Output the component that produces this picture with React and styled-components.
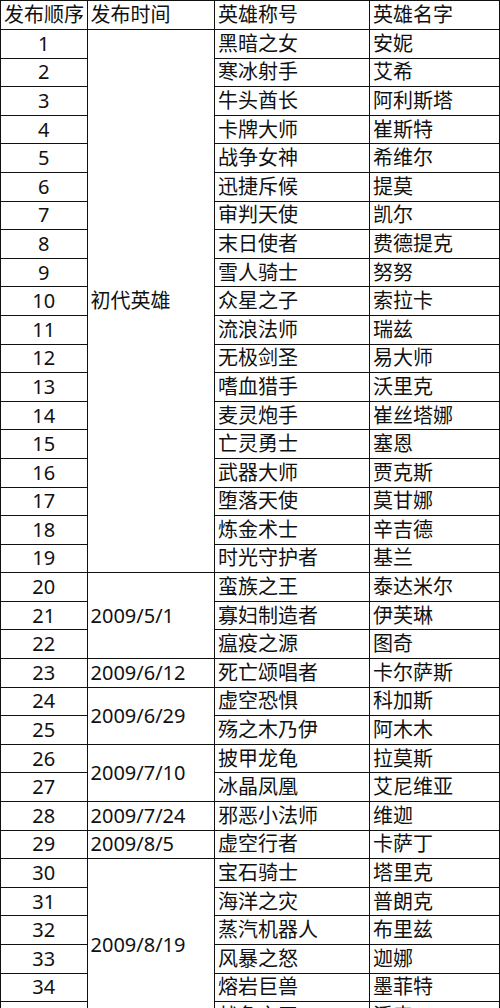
import styled, { createGlobalStyle } from "styled-components";

const GlobalStyle = createGlobalStyle`
  html, body {
    margin: 0;
    padding: 0;
    background: #fff;
    overflow: hidden;
  }
  body {
    font-family: "Noto Sans", "Noto Sans CJK SC", sans-serif;
    color: #111;
  }
`;

const heroes = [
  ["黑暗之女", "安妮"],
  ["寒冰射手", "艾希"],
  ["牛头酋长", "阿利斯塔"],
  ["卡牌大师", "崔斯特"],
  ["战争女神", "希维尔"],
  ["迅捷斥候", "提莫"],
  ["审判天使", "凯尔"],
  ["末日使者", "费德提克"],
  ["雪人骑士", "努努"],
  ["众星之子", "索拉卡"],
  ["流浪法师", "瑞兹"],
  ["无极剑圣", "易大师"],
  ["嗜血猎手", "沃里克"],
  ["麦灵炮手", "崔丝塔娜"],
  ["亡灵勇士", "塞恩"],
  ["武器大师", "贾克斯"],
  ["堕落天使", "莫甘娜"],
  ["炼金术士", "辛吉德"],
  ["时光守护者", "基兰"],
  ["蛮族之王", "泰达米尔"],
  ["寡妇制造者", "伊芙琳"],
  ["瘟疫之源", "图奇"],
  ["死亡颂唱者", "卡尔萨斯"],
  ["虚空恐惧", "科加斯"],
  ["殇之木乃伊", "阿木木"],
  ["披甲龙龟", "拉莫斯"],
  ["冰晶凤凰", "艾尼维亚"],
  ["邪恶小法师", "维迦"],
  ["虚空行者", "卡萨丁"],
  ["宝石骑士", "塔里克"],
  ["海洋之灾", "普朗克"],
  ["蒸汽机器人", "布里兹"],
  ["风暴之怒", "迦娜"],
  ["熔岩巨兽", "墨菲特"],
  ["战争之王", "潘森"],
];

// release date groups: [label, first row, row count]
const dates = [
  ["初代英雄", 1, 19],
  ["2009/5/1", 20, 3],
  ["2009/6/12", 23, 1],
  ["2009/6/29", 24, 2],
  ["2009/7/10", 26, 2],
  ["2009/7/24", 28, 1],
  ["2009/8/5", 29, 1],
  ["2009/8/19", 30, 6],
];

function App() {
  return (
    <>
      <GlobalStyle />
      <Table>
        <colgroup>
          <col style={{ width: 86.5 }} />
          <col style={{ width: 127.5 }} />
          <col style={{ width: 155 }} />
          <col style={{ width: 130 }} />
        </colgroup>
        <thead>
          <HeadRow>
            <Cell>发布顺序</Cell>
            <Cell>发布时间</Cell>
            <Cell>英雄称号</Cell>
            <Cell>英雄名字</Cell>
          </HeadRow>
        </thead>
        <tbody>
          {heroes.map(([title, name], i) => {
            const n = i + 1;
            const group = dates.find(d => d[1] === n);
            return (
              <Row key={n}>
                <Cell $center>{n}</Cell>
                {group && <Cell rowSpan={group[2]}>{group[0]}</Cell>}
                <Cell>{title}</Cell>
                <Cell>{name}</Cell>
              </Row>
            );
          })}
        </tbody>
      </Table>
    </>
  );
}

const Table = styled.table`
  border-collapse: collapse;
  table-layout: fixed;
  width: 499px;
  font-size: 20px;
`;

const HeadRow = styled.tr`
  height: 29px;
`;

const Row = styled.tr`
  height: 28.6px;
`;

const Cell = styled.td`
  border: 1.5px solid #111;
  padding: 0 0 0 3px;
  line-height: 26px;
  white-space: nowrap;
  overflow: hidden;
  vertical-align: middle;
  text-align: ${props => (props.$center ? "center" : "left")};
  ${props => props.$center && "padding: 0;"}
`;

export default App;
